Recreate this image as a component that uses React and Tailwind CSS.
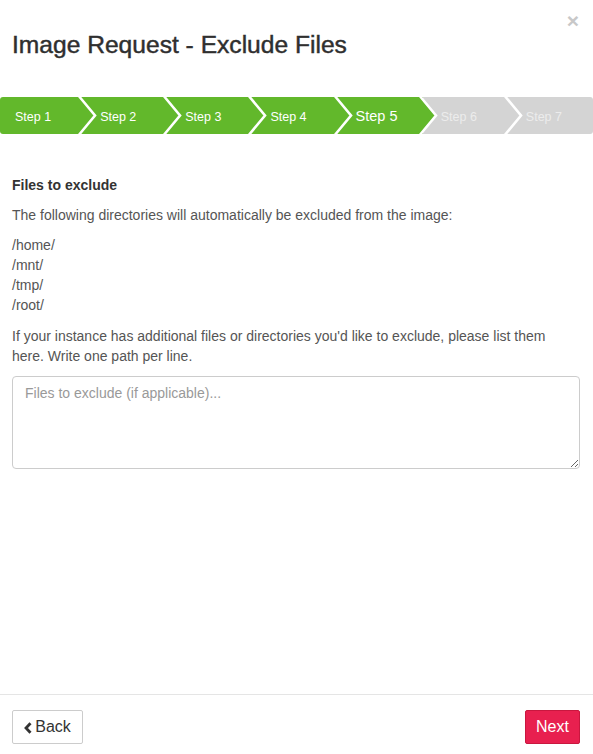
import React from "react";

const GREEN = "#62b82b";
const GRAY = "#d4d4d4";

const steps = [
  { label: "Step 1", done: true },
  { label: "Step 2", done: true },
  { label: "Step 3", done: true },
  { label: "Step 4", done: true },
  { label: "Step 5", done: true, active: true },
  { label: "Step 6", done: false },
  { label: "Step 7", done: false },
];

function Chevron({ color }) {
  return (
    <svg
      className="absolute top-0 -right-[16px] h-full w-[22px] z-10 overflow-visible"
      viewBox="0 0 22 37"
      preserveAspectRatio="none"
    >
      <polygon points="0,0 2,0 19,18.5 2,37 0,37" fill={color} />
      <polyline
        points="2,-2 19,18.5 2,39"
        fill="none"
        stroke="#ffffff"
        strokeWidth="2.6"
      />
    </svg>
  );
}

export default function App() {
  return (
    <div
      className="relative flex h-[754px] w-[593px] flex-col bg-white text-[#555]"
      style={{ fontFamily: '"Liberation Sans", Arial, sans-serif' }}
    >
      <button className="absolute right-[14px] top-[10px] text-[21px] font-bold leading-none text-[#c8c8c8]">
        ×
      </button>

      <h1 className="px-3 pt-[33px] text-[24.6px] leading-[24px] text-[#2f2f2f] [-webkit-text-stroke:0.45px_#2f2f2f]">
        Image Request - Exclude Files
      </h1>

      <div className="mt-[40px] flex h-[37px] w-full">
        {steps.map((s, i) => {
          const bg = s.done ? GREEN : GRAY;
          const last = i === steps.length - 1;
          return (
            <div
              key={s.label}
              className={
                "relative flex flex-1 items-center pt-[3px] " +
                (i === 0 ? "rounded-l-[3px] pl-[15px] " : "pl-[18px] ") +
                (last ? "rounded-r-[3px] " : "")
              }
              style={{ backgroundColor: bg }}
            >
              <span
                className={
                  s.active
                    ? "text-[14.5px] text-white"
                    : s.done
                    ? "text-[12.5px] text-white"
                    : "text-[12.5px] text-[#ececec]"
                }
              >
                {s.label}
              </span>
              {!last && <Chevron color={bg} />}
            </div>
          );
        })}
      </div>

      <div className="px-3 pr-[13px] pt-[41px] text-[14px] leading-[20px]">
        <h4 className="mb-[10px] font-bold text-[#333]">Files to exclude</h4>
        <p className="mb-[10px]">
          The following directories will automatically be excluded from the image:
        </p>
        <div className="mb-[11px]">
          <div>/home/</div>
          <div>/mnt/</div>
          <div>/tmp/</div>
          <div>/root/</div>
        </div>
        <p className="mb-[10px]">
          If your instance has additional files or directories you'd like to exclude, please list them
          here. Write one path per line.
        </p>
        <textarea
          className="block h-[93px] w-full rounded-[4px] border border-[#cccccc] px-3 py-[6px] text-[14px] leading-[20px] text-[#555] placeholder:text-[#999] outline-none"
          placeholder="Files to exclude (if applicable)..."
        />
      </div>

      <div className="flex-1" />

      <div className="flex items-center justify-between border-t border-[#e5e5e5] px-3 pr-[13px] pb-[10px] pt-[15px]">
        <button className="flex h-[34px] w-[71px] items-center justify-center gap-[3px] rounded-[2px] border border-[#cccccc] bg-white text-[16px] text-[#333]">
          <svg width="8" height="12" viewBox="0 0 8 12" className="mt-[1px]">
            <polyline
              points="6.5,1.2 2,6 6.5,10.8"
              fill="none"
              stroke="#333"
              strokeWidth="2.8"
              strokeLinejoin="miter"
            />
          </svg>
          <span>Back</span>
        </button>
        <button className="flex h-[34px] w-[55px] items-center justify-center rounded-[2px] border border-[#c9173f] bg-[#e8204f] text-[16px] text-white">
          Next
        </button>
      </div>
    </div>
  );
}
